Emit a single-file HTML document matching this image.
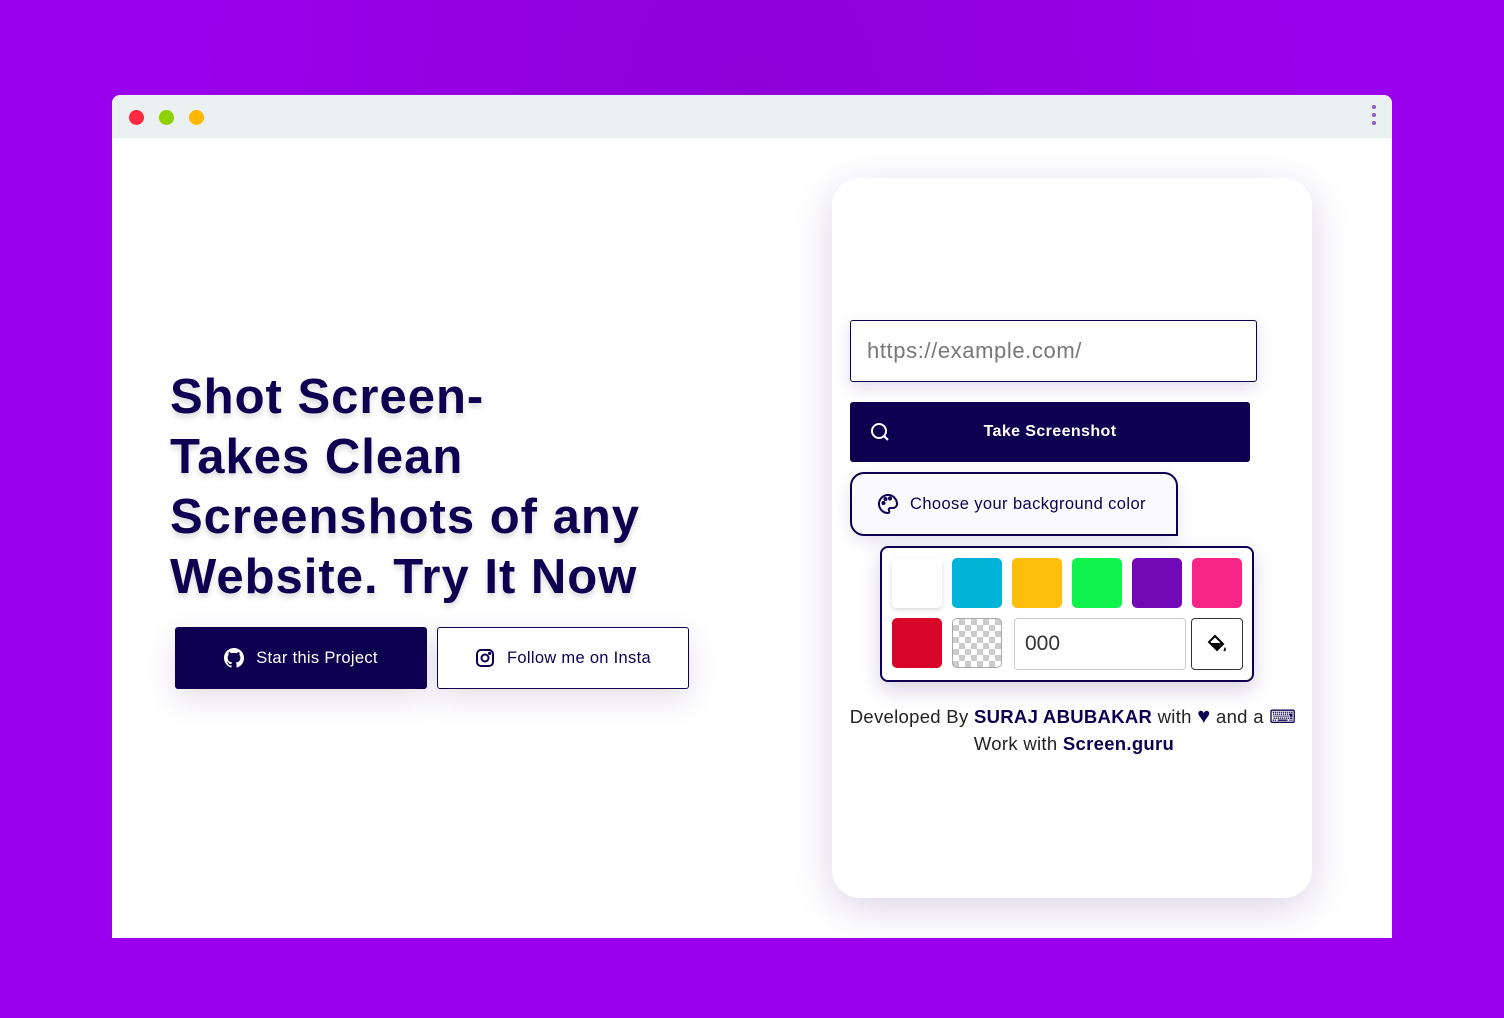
<!DOCTYPE html>
<html><head><meta charset="utf-8"><style>
*{box-sizing:border-box;margin:0;padding:0}
body{width:1504px;height:1018px;background:radial-gradient(ellipse at 50% 10%,#8f00d8 0%,#9b00ee 60%);font-family:"Liberation Sans",sans-serif;position:relative;overflow:hidden}
.win{position:absolute;left:112px;top:95px;width:1280px;height:843px;background:#fff;border-radius:8px 8px 0 0;overflow:hidden}
.bar{height:43px;background:#ebf0f0;position:relative}
.dot{position:absolute;top:15px;width:15px;height:15px;border-radius:50%}
.menu{position:absolute;right:16px;top:10px;width:4px}
.menu i{display:block;width:4px;height:4px;border-radius:50%;background:#8a5cc0;margin-bottom:4px}
h1{position:absolute;left:58px;top:272px;font-size:49px;line-height:60px;color:#0e0050;font-weight:bold;letter-spacing:1px;text-shadow:0 4px 6px rgba(0,0,0,.15)}
.b{position:absolute;top:532px;height:62px;width:252px;border-radius:3px;display:flex;align-items:center;justify-content:center;font-size:16.5px;letter-spacing:.3px;gap:12px;box-shadow:0 10px 30px rgba(80,40,120,.15)}
.card{position:absolute;left:720px;top:83px;width:480px;height:720px;background:#fff;border-radius:28px;box-shadow:0 10px 40px rgba(60,30,120,.18)}
.abs{position:absolute}
.sw{position:absolute;width:50px;height:50px;border-radius:5px}
</style></head><body>
<div class="win">
<div class="bar">
<div class="dot" style="left:17px;background:#ff2a40"></div>
<div class="dot" style="left:47px;background:#8fd000"></div>
<div class="dot" style="left:77px;background:#ffb800"></div>
<div class="menu"><i></i><i></i><i></i></div>
</div>
<h1>Shot Screen-<br>Takes Clean<br>Screenshots of any<br>Website. Try It Now</h1>
<div class="b" style="left:63px;background:#0e0050;color:#fff">
<svg width="20" height="20" viewBox="0 0 16 16" fill="#fff"><path d="M8 0C3.58 0 0 3.58 0 8c0 3.54 2.29 6.53 5.470 7.59.4.07.55-.17.55-.38v-1.33c-2.23.48-2.7-1.07-2.7-1.070-.36-.92-.89-1.17-.89-1.17-.73-.5.05-.49.05-.49.8.06 1.23.83 1.23.83.72 1.23 1.88.87 2.34.67.07-.52.28-.87.51-1.070-1.78-.2-3.64-.89-3.64-3.95 0-.87.31-1.59.82-2.15-.08-.2-.36-1.02.08-2.12 0 0 .67-.21 2.2.82a7.6 7.6 0 014 0c1.53-1.04 2.2-.82 2.2-.82.44 1.1.16 1.92.08 2.12.51.56.82 1.27.82 2.15 0 3.07-1.87 3.75-3.65 3.95.29.25.54.73.54 1.48v2.2c0 .21.15.46.55.38A8 8 0 0016 8c0-4.42-3.58-8-8-8z"/></svg>Star this Project</div>
<div class="b" style="left:325px;background:#fff;color:#0e0050;border:1px solid #0e0050">
<svg width="20" height="20" viewBox="0 0 20 20" fill="none" stroke="#0e0050" stroke-width="2"><rect x="2" y="2" width="16" height="16" rx="4"/><circle cx="10" cy="10" r="3.5"/><circle cx="14.6" cy="5.4" r=".6" fill="#0e0050"/></svg>Follow me on Insta</div>
<div class="card">
<div class="abs" style="left:18px;top:142px;width:407px;height:62px;border:1px solid #0e0050;border-radius:3px;box-shadow:0 6px 16px rgba(60,30,120,.15);font-size:22px;letter-spacing:.6px;color:#777;padding:17px 16px">https://example.com/</div>
<div class="abs" style="left:18px;top:224px;width:400px;height:60px;background:#0e0050;border-radius:3px;color:#fff;font-weight:bold;font-size:16px;letter-spacing:.4px;line-height:60px;text-align:center">Take Screenshot
<svg class="abs" style="left:20px;top:20px" width="20" height="20" viewBox="0 0 20 20" fill="none" stroke="#fff" stroke-width="2"><circle cx="9" cy="9" r="7"/><path d="M14 14l4 4"/></svg></div>
<div class="abs" style="left:18px;top:294px;width:328px;height:64px;border:2px solid #0e0050;border-radius:14px 14px 0 14px;background:#faf9fd;box-shadow:0 6px 16px rgba(60,30,120,.12);font-size:16.5px;letter-spacing:.4px;color:#0e0050;padding:21px 0 0 58px">Choose your background color
<svg class="abs" style="left:25px;top:19px" width="22" height="22" viewBox="0 0 22 22" fill="none" stroke="#0e0050" stroke-width="2"><path d="M11 2a9 9 0 100 18c1.5 0 1.6-1.5 1-2.5s-.2-2.5 1.5-2.5H16a4 4 0 004-4C20 6 16 2 11 2z"/><circle cx="6.5" cy="10" r="1" fill="#0e0050"/><circle cx="8.5" cy="6" r="1" fill="#0e0050"/><circle cx="13" cy="5.5" r="1" fill="#0e0050"/></svg></div>
<div class="abs" style="left:48px;top:368px;width:374px;height:136px;border:2px solid #0e0050;border-radius:8px;background:#fff;box-shadow:0 8px 20px rgba(60,30,120,.2)">
<div class="sw" style="left:10px;top:10px;background:#fff;box-shadow:0 2px 5px rgba(0,0,0,.15)"></div>
<div class="sw" style="left:70px;top:10px;background:#00b4d8"></div>
<div class="sw" style="left:130px;top:10px;background:#ffbe0b"></div>
<div class="sw" style="left:190px;top:10px;background:#10f24e"></div>
<div class="sw" style="left:250px;top:10px;background:#7209b7"></div>
<div class="sw" style="left:310px;top:10px;background:#f72585"></div>
<div class="sw" style="left:10px;top:70px;background:#d90429"></div>
<div class="sw" style="left:70px;top:70px;border:1px solid #aaa;background-color:#fff;background-image:linear-gradient(45deg,#ccc 25%,transparent 25%,transparent 75%,#ccc 75%),linear-gradient(45deg,#ccc 25%,transparent 25%,transparent 75%,#ccc 75%);background-size:12px 12px;background-position:0 0,6px 6px"></div>
<div class="abs" style="left:132px;top:70px;width:172px;height:52px;border:1px solid #ccc;border-radius:4px;font-size:21px;color:#333;padding:13px 10px">000</div>
<div class="abs" style="left:309px;top:70px;width:52px;height:52px;border:1px solid #333;border-radius:4px;display:flex;align-items:center;justify-content:center"><svg width="22" height="22" viewBox="0 0 22 22"><path d="M9 3l8 8-6 6-8-8z" fill="none" stroke="#000" stroke-width="2"/><path d="M3 10h13l-5 6z" fill="#000"/><path d="M19 14c1 2 1.5 3 0 4s-2-1 0-4z" fill="#000"/></svg></div>
</div>
<div class="abs" style="left:0;top:524px;width:480px;text-align:center;font-size:18.5px;letter-spacing:.3px;color:#222;line-height:27px;white-space:nowrap">
<div style="padding-left:2px">Developed By <b style="color:#0e0050">SURAJ ABUBAKAR</b> with <span style="color:#0e0050;font-size:22px">♥</span> and a <span style="color:#0e0050">⌨</span></div>
<div style="padding-left:4px">Work with <b style="color:#0e0050">Screen.guru</b></div>
</div>
</div>
</div>
</body></html>
